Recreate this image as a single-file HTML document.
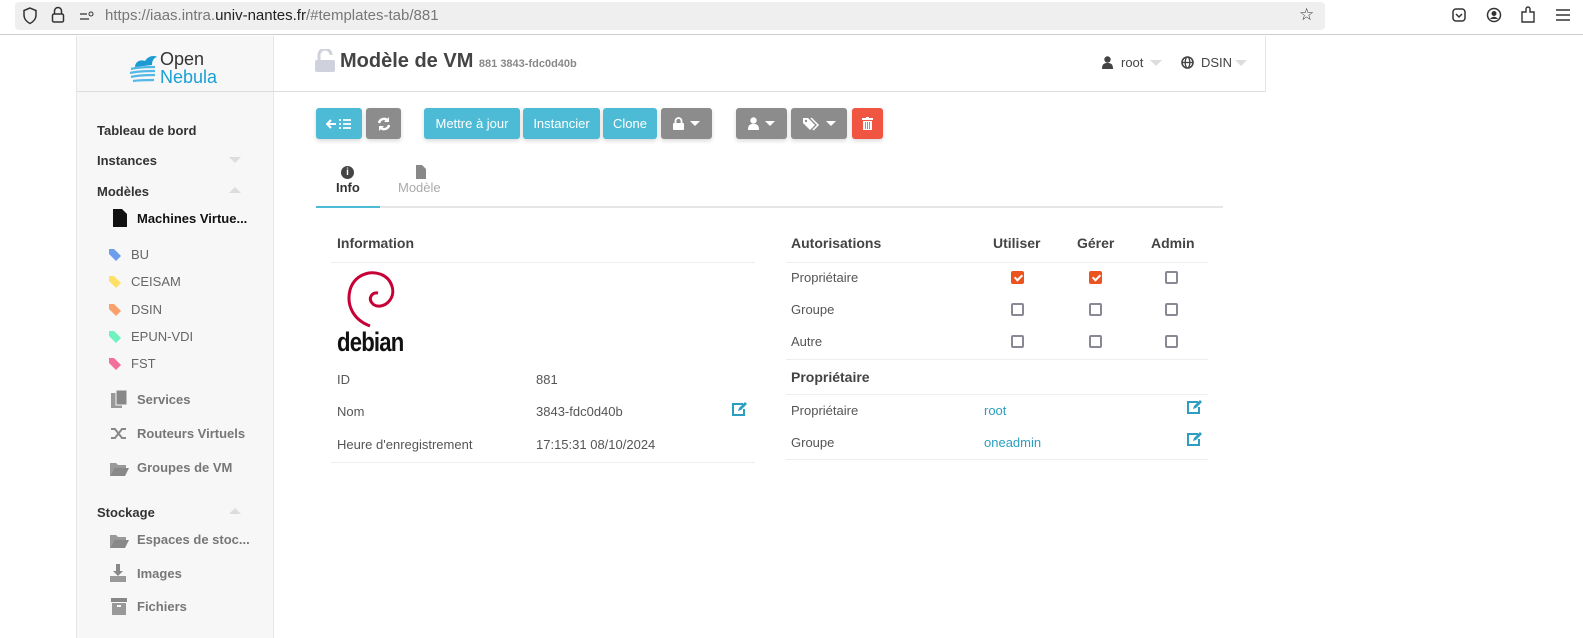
<!DOCTYPE html>
<html><head><meta charset="utf-8"><style>
*{margin:0;padding:0;box-sizing:border-box}
body{width:1583px;height:638px;overflow:hidden;background:#fff;font-family:"Liberation Sans",sans-serif;position:relative;color:#444}
.a{position:absolute;white-space:nowrap}
.side{left:76px;top:36px;width:198px;height:602px;background:#f7f7f7;border-left:1px solid #e6e6e6;border-right:1px solid #e6e6e6}
.nav{font-size:13px;font-weight:bold;color:#333}
.sub{font-size:13px;color:#666}
.btn{position:absolute;top:108px;height:31px;border-radius:3px;color:#fff;font-size:13px;display:flex;align-items:center;justify-content:center;gap:6px;box-shadow:0 2px 4px rgba(0,0,0,.15)}
.b{background:#4dbbd5}.g{background:#8c8c8c}.r{background:#ef5540}
.cb{position:absolute;width:13px;height:13px;border:2px solid #8a8894;border-radius:2px}
.cb.on{background:#e95420;border-color:#e95420}
.cb.on::after{content:"";position:absolute;left:3px;top:0px;width:3px;height:6px;border:solid #fff;border-width:0 2px 2px 0;transform:rotate(45deg)}
.line{position:absolute;height:1px;background:#eee}
.t{font-size:13px;color:#555}
.h{font-size:14px;font-weight:bold;color:#444}
.lk{font-size:13px;color:#2c9fc0}
.tri{position:absolute;width:0;height:0;border-left:6px solid transparent;border-right:6px solid transparent}
.car{width:0;height:0;border-left:5px solid transparent;border-right:5px solid transparent;border-top:5px solid #fff}
</style></head><body>
<div class="a" style="left:0;top:0;width:1583px;height:35px;background:#fff;border-bottom:1px solid #ccc"></div>
<div class="a" style="left:15px;top:2px;width:1310px;height:28px;background:#efefef;border-radius:4px"></div>
<svg class="a" style="left:22px;top:7px" width="16" height="18" viewBox="0 0 16 18"><path d="M8 1L2 3.5V8c0 4 3 7 6 8.5 3-1.5 6-4.5 6-8.5V3.5z" fill="none" stroke="#333" stroke-width="1.5"/></svg>
<svg class="a" style="left:51px;top:6px" width="14" height="18" viewBox="0 0 14 18"><path d="M3.5 8V5a3.5 3.5 0 017 0v3" fill="none" stroke="#333" stroke-width="1.5"/><rect x="1.5" y="8" width="11" height="8" rx="1.5" fill="none" stroke="#333" stroke-width="1.5"/></svg>
<svg class="a" style="left:79px;top:10px" width="16" height="12"><path d="M1 4h7M1 9h9" stroke="#333" stroke-width="1.3"/><circle cx="12" cy="4" r="2" fill="none" stroke="#333"/></svg>
<div class="a" style="left:105px;top:7px;font-size:15px;color:#777">https://iaas.intra.<span style="color:#222">univ-nantes.fr</span>/#templates-tab/881</div>
<div class="a" style="left:1299px;top:5px;font-size:17px;color:#333">☆</div>
<svg class="a" style="left:1452px;top:8px" width="14" height="14"><rect x="1" y="1" width="12" height="12" rx="3" fill="none" stroke="#333" stroke-width="1.5"/><path d="M4 6l3 3 3-3" fill="none" stroke="#333" stroke-width="1.5"/></svg>
<svg class="a" style="left:1486px;top:7px" width="16" height="16"><circle cx="8" cy="8" r="6.5" fill="none" stroke="#333" stroke-width="1.5"/><circle cx="8" cy="6.5" r="2.5" fill="#333"/><path d="M4 12c2-3 6-3 8 0" fill="#333"/></svg>
<svg class="a" style="left:1520px;top:6px" width="16" height="18"><path d="M2 6h4V3a2 2 0 014 0v3h4v10H2z" fill="none" stroke="#333" stroke-width="1.4"/></svg>
<svg class="a" style="left:1556px;top:9px" width="14" height="12"><path d="M0 1h14M0 6h14M0 11h14" stroke="#333" stroke-width="1.5"/></svg>

<div class="a side"></div>
<div class="a" style="left:76px;top:91px;width:1190px;height:1px;background:#ddd"></div>
<div class="a" style="left:1265px;top:36px;width:1px;height:56px;background:#e6e6e6"></div>
<svg class="a" style="left:129px;top:51px" width="30" height="32" viewBox="0 0 30 32"><path d="M6 16c0-5 5-8 10-6 3-5 9-6 12-4-4 1-5 5-5 8z" fill="#1c9bd3"/><path d="M2 18c8-2 16-2 24-2M1 22c9-2 17-2 25-2M2 26c8-2 16-2 24-2M4 30c7-1 14-1 21-1" stroke="#54b8e6" stroke-width="2.2" fill="none"/></svg>
<div class="a" style="left:160px;top:50px;font-size:18px;color:#333;line-height:18px">Open<br><span style="color:#1ba0d6">Nebula</span></div>
<div class="a nav" style="left:97px;top:123px">Tableau de bord</div>
<div class="a nav" style="left:97px;top:153px">Instances</div>
<div class="tri" style="left:229px;top:157px;border-top:6px solid #ddd"></div>
<div class="a nav" style="left:97px;top:184px">Modèles</div>
<div class="tri" style="left:229px;top:187px;border-bottom:6px solid #ddd"></div>
<svg class="a" style="left:113px;top:209px" width="14" height="18"><path d="M0 0h9l5 5v13H0z" fill="#111"/></svg>
<div class="a nav" style="left:137px;top:211px;color:#111">Machines Virtue...</div>
<svg width="0" height="0" style="position:absolute"><defs><path id="tag" d="M0 1v5l7 7 5-5-7-7z"/></defs></svg>
<svg class="a" style="left:109px;top:248px" width="13" height="13"><use href="#tag" fill="#6d9eeb"/></svg><div class="a sub" style="left:131px;top:247px">BU</div>
<svg class="a" style="left:109px;top:275px" width="13" height="13"><use href="#tag" fill="#ffe066"/></svg><div class="a sub" style="left:131px;top:274px">CEISAM</div>
<svg class="a" style="left:109px;top:303px" width="13" height="13"><use href="#tag" fill="#f9a06b"/></svg><div class="a sub" style="left:131px;top:302px">DSIN</div>
<svg class="a" style="left:109px;top:330px" width="13" height="13"><use href="#tag" fill="#6ef2c0"/></svg><div class="a sub" style="left:131px;top:329px">EPUN-VDI</div>
<svg class="a" style="left:109px;top:357px" width="13" height="13"><use href="#tag" fill="#f26e9c"/></svg><div class="a sub" style="left:131px;top:356px">FST</div>
<svg class="a" style="left:111px;top:390px" width="16" height="19"><rect x="0" y="3" width="11" height="15" fill="#999"/><rect x="5" y="0" width="11" height="15" fill="#888" stroke="#f7f7f7"/></svg>
<div class="a sub" style="left:137px;top:392px;font-weight:bold;color:#777">Services</div>
<svg class="a" style="left:110px;top:426px" width="17" height="15"><path d="M1 3h4l7 9h4M1 12h4l7-9h4" fill="none" stroke="#888" stroke-width="2"/></svg>
<div class="a sub" style="left:137px;top:426px;font-weight:bold;color:#777">Routeurs Virtuels</div>
<svg class="a" style="left:110px;top:461px" width="19" height="15"><path d="M0 2h6l2 2h8v3H4l-4 8z" fill="#999"/><path d="M4 7h15l-4 8H0z" fill="#888"/></svg>
<div class="a sub" style="left:137px;top:460px;font-weight:bold;color:#777">Groupes de VM</div>
<div class="a nav" style="left:97px;top:505px">Stockage</div>
<div class="tri" style="left:229px;top:508px;border-bottom:6px solid #ddd"></div>
<svg class="a" style="left:110px;top:533px" width="19" height="15"><path d="M0 2h6l2 2h8v3H4l-4 8z" fill="#999"/><path d="M4 7h15l-4 8H0z" fill="#888"/></svg>
<div class="a sub" style="left:137px;top:532px;font-weight:bold;color:#777">Espaces de stoc...</div>
<svg class="a" style="left:110px;top:564px" width="16" height="18"><path d="M6 0h4v7h3l-5 5-5-5h3z" fill="#888"/><path d="M0 12h16v6H0z" fill="#999"/></svg>
<div class="a sub" style="left:137px;top:566px;font-weight:bold;color:#777">Images</div>
<svg class="a" style="left:111px;top:598px" width="16" height="17"><rect x="0" y="0" width="16" height="4" fill="#888"/><rect x="1" y="5" width="14" height="12" fill="#999"/><rect x="6" y="7" width="4" height="2" fill="#f7f7f7"/></svg>
<div class="a sub" style="left:137px;top:599px;font-weight:bold;color:#777">Fichiers</div>

<svg class="a" style="left:314px;top:49px" width="22" height="24" viewBox="0 0 22 24"><path d="M5 11V6a6 6 0 0112 0" fill="none" stroke="#cfd1dc" stroke-width="3"/><rect x="1" y="11" width="20" height="12" rx="2" fill="#cfd1dc"/></svg>
<div class="a" style="left:340px;top:50px;font-size:20px;color:#444;font-weight:bold">Modèle de VM <span style="font-size:11px;color:#888">881 3843-fdc0d40b</span></div>
<svg class="a" style="left:1102px;top:56px" width="11" height="13"><circle cx="5.5" cy="3.5" r="3.2" fill="#444"/><path d="M0 13c0-5 2-6 5.5-6s5.5 1 5.5 6z" fill="#444"/></svg>
<div class="a" style="left:1121px;top:55px;font-size:13px;color:#444">root</div>
<div class="tri" style="left:1150px;top:60px;border-top:6px solid #ddd"></div>
<svg class="a" style="left:1181px;top:56px" width="13" height="13"><circle cx="6.5" cy="6.5" r="5.5" fill="none" stroke="#444" stroke-width="1.6"/><ellipse cx="6.5" cy="6.5" rx="2.3" ry="5.5" fill="none" stroke="#444" stroke-width="1.3"/><path d="M1 6.5h11" stroke="#444" stroke-width="1.3"/></svg>
<div class="a" style="left:1201px;top:55px;font-size:13px;color:#444">DSIN</div>
<div class="tri" style="left:1235px;top:60px;border-top:6px solid #ddd"></div>

<div class="btn b" style="left:316px;width:46px"><svg width="26" height="12"><path d="M1 6h9M5 2L1 6l4 4" fill="none" stroke="#fff" stroke-width="2"/><path d="M13 2h2M13 6h2M13 10h2M17 2h8M17 6h8M17 10h8" stroke="#fff" stroke-width="1.8"/></svg></div>
<div class="btn g" style="left:366px;width:35px"><svg width="14" height="14"><path d="M2 6a5 5 0 019-2M12 8a5 5 0 01-9 2" fill="none" stroke="#fff" stroke-width="2.4"/><path d="M12 0v5H7zM2 14V9h5z" fill="#fff"/></svg></div>
<div class="btn b" style="left:424px;width:96px">Mettre à jour</div>
<div class="btn b" style="left:523px;width:77px">Instancier</div>
<div class="btn b" style="left:603px;width:54px">Clone</div>
<div class="btn g" style="left:661px;width:51px"><svg width="11" height="13"><path d="M2.5 6V4a3 3 0 016 0v2" fill="none" stroke="#fff" stroke-width="1.8"/><rect x="0" y="6" width="11" height="7" rx="1" fill="#fff"/></svg><div class="car"></div></div>
<div class="btn g" style="left:736px;width:51px"><svg width="11" height="13"><circle cx="5.5" cy="3.5" r="3.2" fill="#fff"/><path d="M0 13c0-5 2-6 5.5-6s5.5 1 5.5 6z" fill="#fff"/></svg><div class="car"></div></div>
<div class="btn g" style="left:791px;width:56px"><svg width="17" height="14"><path d="M0 1v5l7 7 5-5-7-7z" fill="#fff"/><path d="M8 1l7 7-5 5" fill="none" stroke="#fff" stroke-width="1.5"/><circle cx="3" cy="4" r="1.2" fill="#8c8c8c"/></svg><div class="car"></div></div>
<div class="btn r" style="left:852px;width:31px"><svg width="11" height="13"><rect x="0" y="1" width="11" height="2" fill="#fff"/><rect x="4" y="0" width="3" height="2" fill="#fff"/><path d="M1 4h9v9H1z" fill="#fff"/><path d="M3.5 5v7M5.5 5v7M7.5 5v7" stroke="#ef5540" stroke-width="0.8"/></svg></div>

<div class="a" style="left:341px;top:166px;width:13px;height:13px;border-radius:50%;background:#444;color:#fff;font-size:10px;font-weight:bold;text-align:center;line-height:13px">i</div>
<div class="a" style="left:336px;top:180px;font-size:13px;font-weight:bold;color:#333">Info</div>
<svg class="a" style="left:416px;top:165px" width="10" height="14"><path d="M0 0h6l4 4v10H0z" fill="#888"/></svg>
<div class="a" style="left:398px;top:180px;font-size:13px;color:#aaa">Modèle</div>
<div class="line" style="left:316px;top:206px;width:907px;height:2px;background:#e6e6e6"></div>
<div class="line" style="left:316px;top:206px;width:64px;height:2px;background:#4dbbd5"></div>

<div class="a h" style="left:337px;top:235px">Information</div>
<div class="line" style="left:331px;top:262px;width:424px"></div>
<svg class="a" style="left:344px;top:268px" width="56" height="62" viewBox="0 0 56 62"><path d="M26 58C10 52 2 38 6 22 10 8 24 2 36 6c12 4 16 18 10 26-5 7-14 8-18 3-4-5 0-11 6-10" fill="none" stroke="#c70036" stroke-width="3"/></svg>
<div class="a" style="left:337px;top:327px;font-size:27px;font-weight:bold;color:#111;letter-spacing:-1px;transform:scaleX(.82);transform-origin:left">debian</div>
<div class="a t" style="left:337px;top:372px">ID</div><div class="a t" style="left:536px;top:372px">881</div>
<div class="a t" style="left:337px;top:404px">Nom</div><div class="a t" style="left:536px;top:404px">3843-fdc0d40b</div>
<svg class="a" style="left:732px;top:402px" width="15" height="14"><path d="M11 2H1v11h11V7" fill="none" stroke="#2c9fc0" stroke-width="2"/><path d="M6 9l1-3 6-6 2 2-6 6z" fill="#2c9fc0"/></svg>
<div class="a t" style="left:337px;top:437px">Heure d'enregistrement</div><div class="a t" style="left:536px;top:437px">17:15:31 08/10/2024</div>
<div class="line" style="left:331px;top:462px;width:424px"></div>

<div class="a h" style="left:791px;top:235px">Autorisations</div>
<div class="a h" style="left:993px;top:235px">Utiliser</div>
<div class="a h" style="left:1077px;top:235px">Gérer</div>
<div class="a h" style="left:1151px;top:235px">Admin</div>
<div class="line" style="left:786px;top:262px;width:422px"></div>
<div class="a t" style="left:791px;top:270px">Propriétaire</div>
<div class="a t" style="left:791px;top:302px">Groupe</div>
<div class="a t" style="left:791px;top:334px">Autre</div>
<div class="cb on" style="left:1011px;top:271px"></div><div class="cb on" style="left:1089px;top:271px"></div><div class="cb" style="left:1165px;top:271px"></div>
<div class="cb" style="left:1011px;top:303px"></div><div class="cb" style="left:1089px;top:303px"></div><div class="cb" style="left:1165px;top:303px"></div>
<div class="cb" style="left:1011px;top:335px"></div><div class="cb" style="left:1089px;top:335px"></div><div class="cb" style="left:1165px;top:335px"></div>
<div class="line" style="left:786px;top:359px;width:422px"></div>
<div class="a h" style="left:791px;top:369px">Propriétaire</div>
<div class="line" style="left:786px;top:394px;width:422px"></div>
<div class="a t" style="left:791px;top:403px">Propriétaire</div><div class="a lk" style="left:984px;top:403px">root</div>
<svg class="a" style="left:1187px;top:400px" width="15" height="14"><path d="M11 2H1v11h11V7" fill="none" stroke="#2c9fc0" stroke-width="2"/><path d="M6 9l1-3 6-6 2 2-6 6z" fill="#2c9fc0"/></svg>
<div class="a t" style="left:791px;top:435px">Groupe</div><div class="a lk" style="left:984px;top:435px">oneadmin</div>
<svg class="a" style="left:1187px;top:432px" width="15" height="14"><path d="M11 2H1v11h11V7" fill="none" stroke="#2c9fc0" stroke-width="2"/><path d="M6 9l1-3 6-6 2 2-6 6z" fill="#2c9fc0"/></svg>
<div class="line" style="left:786px;top:459px;width:422px"></div>
</body></html>
